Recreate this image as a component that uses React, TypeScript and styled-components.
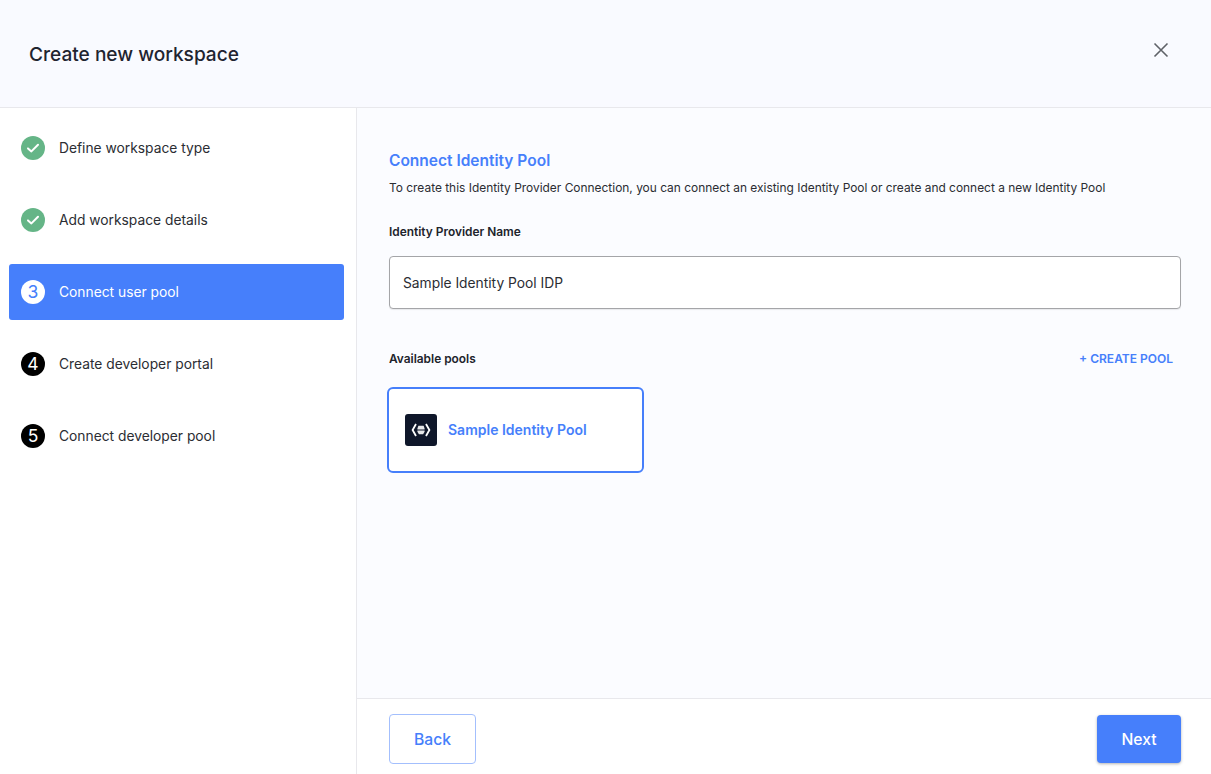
import React from "react";
import styled, { createGlobalStyle } from "styled-components";

const Global = createGlobalStyle`
  html, body { margin: 0; padding: 0; background: #fff; }
  body { font-family: Inter, "Liberation Sans", sans-serif; -webkit-font-smoothing: antialiased; }
  * { box-sizing: border-box; }
`;

const Page = styled.div`
  width: 1211px;
  height: 774px;
  overflow: hidden;
  display: flex;
  flex-direction: column;
  background: #fff;
`;

const Header = styled.header`
  height: 108px;
  flex: none;
  display: flex;
  align-items: flex-start;
  justify-content: space-between;
  background: #f9faff;
  border-bottom: 1px solid #e8e8ec;
  padding: 41px 41px 0 29px;
`;

const Title = styled.h1`
  margin: 0;
  font-size: 19.1px;
  line-height: 26px;
  font-weight: 500;
  color: #1f2430;
`;

const Close = styled.button`
  width: 18px;
  height: 18px;
  padding: 0;
  border: 0;
  background: none;
  display: flex;
  color: #5f6268;
`;

const Body = styled.div`
  flex: 1;
  display: flex;
  min-height: 0;
`;

const Sidebar = styled.nav`
  width: 357px;
  flex: none;
  border-right: 1px solid #e8e8ec;
  padding: 12px 12px 0 9px;
  display: flex;
  flex-direction: column;
  gap: 16px;
`;

const Step = styled.div<{ $active?: boolean }>`
  height: 56px;
  display: flex;
  align-items: center;
  gap: 14px;
  padding-left: 12px;
  border-radius: 3px;
  font-size: 13.8px;
  color: ${(p) => (p.$active ? "#fff" : "#2b2d33")};
  background: ${(p) => (p.$active ? "#467ffb" : "transparent")};
`;

const Badge = styled.span<{ $kind: "done" | "active" | "todo" }>`
  width: 24px;
  height: 24px;
  flex: none;
  border-radius: 50%;
  display: flex;
  align-items: center;
  justify-content: center;
  padding-bottom: ${(p) => (p.$kind === "done" ? "0" : "2px")};
  font-size: 17.5px;
  font-weight: 400;
  background: ${(p) => (p.$kind === "done" ? "#65b587" : p.$kind === "active" ? "#fff" : "#000")};
  color: ${(p) => (p.$kind === "active" ? "#467ffb" : "#fff")};
`;

const Main = styled.main`
  flex: 1;
  display: flex;
  flex-direction: column;
  min-width: 0;
`;

const Content = styled.section`
  flex: 1;
  background: #fbfcff;
  padding: 43px 30px 0 32px;
`;

const Heading = styled.h2`
  margin: 0;
  font-size: 15.5px;
  line-height: 20px;
  font-weight: 600;
  color: #467ffb;
`;

const Description = styled.p`
  margin: 9px 0 0;
  font-size: 11.93px;
  line-height: 16px;
  color: #2b2d33;
`;

const FieldLabel = styled.label`
  display: block;
  margin-top: 28px;
  font-size: 11.9px;
  line-height: 16px;
  font-weight: 600;
  color: #20232b;
`;

const NameInput = styled.input`
  display: block;
  width: 792px;
  height: 53px;
  margin-top: 16px;
  padding: 0 13px;
  border: 1px solid #a4a5a8;
  border-radius: 4px;
  background: #fff;
  font: 400 13.8px Inter, sans-serif;
  color: #2b2d33;
  outline: none;
  box-shadow: 0 1px 1px rgba(0, 0, 0, 0.08);
`;

const PoolsRow = styled.div`
  display: flex;
  align-items: center;
  justify-content: space-between;
  width: 784px;
  margin-top: 42px;
`;

const PoolsLabel = styled.span`
  font-size: 11.9px;
  line-height: 16px;
  font-weight: 600;
  color: #20232b;
`;

const CreatePool = styled.button`
  border: 0;
  padding: 0;
  background: none;
  font: 600 12px/16px Inter, sans-serif;
  color: #467ffb;
`;

const PoolCard = styled.div`
  width: 257px;
  height: 86px;
  margin: 20px 0 0 -2px;
  display: flex;
  align-items: center;
  gap: 11px;
  padding-left: 16px;
  border: 2px solid #467ffb;
  border-radius: 6px;
  background: #fff;
  font-size: 14px;
  font-weight: 600;
  color: #467ffb;
`;

const PoolName = styled.span`
  padding-bottom: 2px;
`;

const PoolLogo = styled.span`
  width: 32px;
  height: 32px;
  flex: none;
  border-radius: 3px;
  background: #0f172a;
  display: flex;
  align-items: center;
  justify-content: center;
`;

const Footer = styled.footer`
  height: 76px;
  flex: none;
  border-top: 1px solid #e8e8ec;
  background: #fff;
  display: flex;
  align-items: center;
  justify-content: space-between;
  padding: 5px 30px 0 32px;
`;

const BackButton = styled.button`
  width: 87px;
  height: 50px;
  border: 1px solid #a3bffd;
  border-radius: 4px;
  background: #fff;
  font: 500 15.7px Inter, sans-serif;
  color: #467ffb;
`;

const NextButton = styled.button`
  width: 84px;
  height: 48px;
  border: 0;
  border-radius: 4px;
  background: #467ffb;
  font: 500 15.7px Inter, sans-serif;
  color: #fff;
  box-shadow: 0 1px 3px rgba(0, 0, 0, 0.3);
`;

const Check = () => (
  <svg width="14" height="14" viewBox="0 0 14 14" fill="none">
    <path d="M2 7.4 5.4 10.4 12 3.8" stroke="#fff" strokeWidth="2" strokeLinecap="round" strokeLinejoin="round" />
  </svg>
);

const steps: { label: string; kind: "done" | "active" | "todo"; n?: number }[] = [
  { label: "Define workspace type", kind: "done" },
  { label: "Add workspace details", kind: "done" },
  { label: "Connect user pool", kind: "active", n: 3 },
  { label: "Create developer portal", kind: "todo", n: 4 },
  { label: "Connect developer pool", kind: "todo", n: 5 },
];

export default function App() {
  return (
    <Page>
      <Global />
      <Header>
        <Title>Create new workspace</Title>
        <Close aria-label="Close">
          <svg width="18" height="18" viewBox="0 0 18 18" fill="none">
            <path d="M2.5 2.5 15.5 15.5M15.5 2.5 2.5 15.5" stroke="currentColor" strokeWidth="1.6" />
          </svg>
        </Close>
      </Header>
      <Body>
        <Sidebar>
          {steps.map((s) => (
            <Step key={s.label} $active={s.kind === "active"}>
              <Badge $kind={s.kind}>{s.kind === "done" ? <Check /> : s.n}</Badge>
              <span>{s.label}</span>
            </Step>
          ))}
        </Sidebar>
        <Main>
          <Content>
            <Heading>Connect Identity Pool</Heading>
            <Description>
              To create this Identity Provider Connection, you can connect an existing Identity Pool or create and connect a new Identity Pool
            </Description>
            <FieldLabel>Identity Provider Name</FieldLabel>
            <NameInput readOnly value="Sample Identity Pool IDP" />
            <PoolsRow>
              <PoolsLabel>Available pools</PoolsLabel>
              <CreatePool>+ CREATE POOL</CreatePool>
            </PoolsRow>
            <PoolCard>
              <PoolLogo>
                <svg width="20" height="16" viewBox="0 0 20 16" fill="none">
                  <path d="M5 2 1.6 8 5 14M15 2l3.400 6L15 14" stroke="#fff" strokeWidth="1.8" />
                  <path d="M7.400 3.800h5.200l1 2.600v1.100H6.400V6.400zM6.400 8.500h7.200v1.300l-1.500 2.400H7.900l-1.500-2.400z" fill="#fff" opacity="0.9" />
                </svg>
              </PoolLogo>
              <PoolName>Sample Identity Pool</PoolName>
            </PoolCard>
          </Content>
          <Footer>
            <BackButton>Back</BackButton>
            <NextButton>Next</NextButton>
          </Footer>
        </Main>
      </Body>
    </Page>
  );
}
